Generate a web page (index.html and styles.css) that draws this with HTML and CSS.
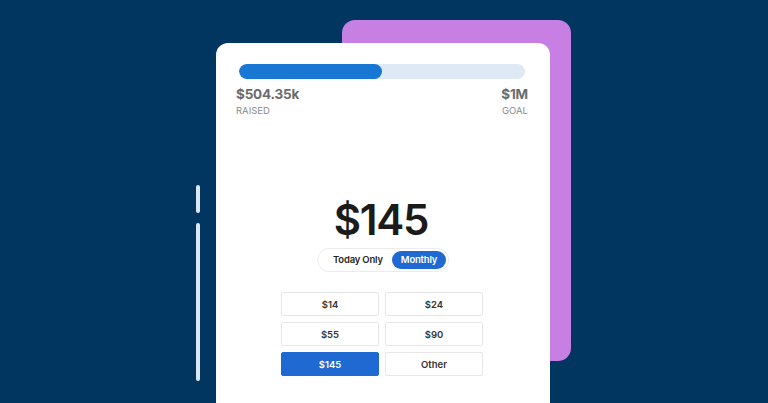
FILE: index.html
```html
<!DOCTYPE html>
<html>
<head>
<meta charset="utf-8">
<link rel="stylesheet" href="styles.css">
</head>
<body>
<div class="stage">
  <div class="backdrop"></div>
  <div class="line line-short"></div>
  <div class="line line-long"></div>
  <div class="card">
    <div class="bar"><div class="fill" style="width:50%"></div></div>
    <div class="stats">
      <div class="stat">
        <div class="num">$504.35k</div>
        <div class="lbl">RAISED</div>
      </div>
      <div class="stat right">
        <div class="num">$1M</div>
        <div class="lbl">GOAL</div>
      </div>
    </div>
    <div class="amount">$145</div>
    <div class="toggle">
      <span class="opt">Today Only</span>
      <span class="opt active">Monthly</span>
    </div>
    <div class="grid">
      <div class="btn">$14</div>
      <div class="btn">$24</div>
      <div class="btn">$55</div>
      <div class="btn">$90</div>
      <div class="btn selected">$145</div>
      <div class="btn">Other</div>
    </div>
  </div>
</div>
</body>
</html>
```
FILE: styles.css
```css
html, body {
  margin: 0;
  padding: 0;
  background: #003660;
  overflow: hidden;
}
body {
  font-family: Inter, "Liberation Sans", sans-serif;
  width: 768px;
  height: 403px;
}
.stage {
  position: relative;
  width: 768px;
  height: 403px;
  padding-top: 43px;
  box-sizing: border-box;
}
.backdrop {
  position: absolute;
  left: 342px;
  top: 20px;
  width: 229px;
  height: 341px;
  background: #c77fe3;
  border-radius: 13px;
}
.line {
  position: absolute;
  left: 196px;
  width: 4px;
  background: #dde7f1;
  border-radius: 2px;
}
.line-short { top: 185px; height: 28px; }
.line-long { top: 223px; height: 158px; }
.card {
  position: relative;
  margin-left: 216px;
  width: 334px;
  height: 380px;
  background: #ffffff;
  border-radius: 12px 12px 0 0;
  padding: 21px 25px 0 23px;
  box-sizing: border-box;
}
.bar {
  height: 15px;
  background: #dfe9f5;
  border-radius: 8px;
  overflow: hidden;
}
.fill {
  height: 100%;
  background: #1877d3;
  border-radius: 8px;
}
.stats {
  display: flex;
  justify-content: space-between;
  margin: 7px -3px 0 -3px;
}
.stat.right { text-align: right; }
.num {
  font-size: 13.5px;
  font-weight: 700;
  color: #6b6b6b;
  line-height: 17px;
  letter-spacing: -0.2px;
}
.lbl {
  font-size: 9.5px;
  color: #8a8a8a;
  line-height: 12px;
  margin-top: 2px;
}
.amount {
  margin-top: 78px;
  text-align: center;
  font-size: 42px;
  font-weight: 600;
  color: #1b1b1b;
  line-height: 50px;
  letter-spacing: -1.2px;
  padding-right: 2px;
}
.toggle {
  display: flex;
  width: 132px;
  height: 24px;
  margin: 3px 0 0 78px;
  box-sizing: border-box;
  border: 1px solid #ececec;
  border-radius: 12px;
  padding: 2px;
  align-items: center;
  justify-content: space-between;
}
.opt {
  font-size: 9.5px;
  font-weight: 600;
  color: #262626;
  padding: 0 0 0 13px;
  line-height: 18px;
  letter-spacing: -0.2px;
}
.opt.active {
  background: #1e69d2;
  color: #ffffff;
  border-radius: 10px;
  padding: 0;
  width: 54px;
  text-align: center;
}
.grid {
  display: grid;
  grid-template-columns: 98px 98px;
  column-gap: 6px;
  row-gap: 6px;
  margin-top: 20px;
  margin-left: 42px;
}
.btn {
  height: 24px;
  box-sizing: border-box;
  border: 1px solid #e7e7e7;
  border-radius: 2px;
  display: flex;
  align-items: center;
  justify-content: center;
  font-size: 9.5px;
  font-weight: 600;
  color: #333333;
}
.btn.selected {
  background: #1e69d2;
  border-color: #1e69d2;
  color: #ffffff;
}
```
